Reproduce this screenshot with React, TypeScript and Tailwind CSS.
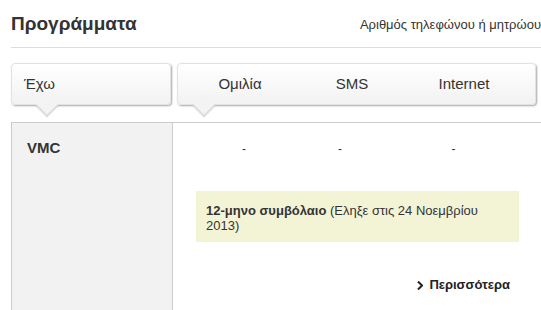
import React from "react";

function Tab({ children, className, arrowLeft }: { children: React.ReactNode; className: string; arrowLeft: string }) {
  return (
    <div className={`relative h-[42px] rounded-[4px] border border-[#e2e2e2] bg-gradient-to-b from-white to-[#f2f2f2] shadow-[1px_1px_2px_rgba(0,0,0,0.35)] ${className}`}>
      {children}
      <div className={`absolute top-[33px] ${arrowLeft} h-[16px] w-[16px] rotate-45 border-b border-r border-[#d6d6d6] bg-[#f3f3f3] shadow-[1px_1px_1px_rgba(0,0,0,0.12)]`} />
    </div>
  );
}

export default function App() {
  return (
    <div className="w-[541px] h-[310px] overflow-hidden bg-white text-[#333] font-['Liberation_Sans',Arial,sans-serif]">
      <div className="pl-[11px]">
        <div className="flex h-[48px] items-end justify-between border-b border-[#dddddd] pb-[12px]">
          <div className="text-[19px] font-bold leading-[22px] text-[#333]">Προγράμματα</div>
          <div className="text-[13px] leading-[16px] pb-[2px] text-[#333] whitespace-nowrap">Αριθμός τηλεφώνου ή μητρώου</div>
        </div>

        <div className="mt-[15px] flex">
          <Tab className="w-[160px]" arrowLeft="left-[27px]">
            <div className="pl-[12px] pt-[10px] text-[15px] leading-[20px]">Έχω</div>
          </Tab>
          <Tab className="ml-[6px] w-[359px]" arrowLeft="left-[18px]">
            <div className="flex pl-[6px] pt-[10px] text-[15px] leading-[20px]">
              <div className="w-[112px] text-center">Ομιλία</div>
              <div className="w-[112px] text-center">SMS</div>
              <div className="w-[112px] text-center">Internet</div>
            </div>
          </Tab>
        </div>

        <div className="mt-[17px] flex border-t border-[#cccccc] h-[200px]">
          <div className="w-[162px] shrink-0 border-l border-r border-[#cccccc] bg-[#f2f2f2] pl-[15px] pt-[16px] text-[15px] font-bold leading-[18px]">
            VMC
          </div>
          <div className="flex-1 pl-[23px]">
            <div className="flex w-[323px] pt-[18px] text-[12px] leading-[16px]">
              <div className="w-[96px] text-center">-</div>
              <div className="w-[96px] text-center">-</div>
              <div className="w-[131px] text-center">-</div>
            </div>
            <div className="mt-[34px] h-[51px] w-[323px] bg-[#f3f3d6] px-[10px] pt-[12px] text-[13px] leading-[15px]">
              <b>12-μηνο συμβόλαιο</b> (Εληξε στις 24 Νοεμβρίου 2013)
            </div>
            <div className="mt-[35px] flex w-[314px] items-center justify-end gap-[6px] text-[13px] font-bold leading-[16px] text-[#222]">
              <svg width="6" height="9" viewBox="0 0 6 9"><path d="M1 0.5 L5 4.5 L1 8.5" stroke="#222" strokeWidth="2" fill="none" /></svg>
              <span>Περισσότερα</span>
            </div>
          </div>
        </div>
      </div>
    </div>
  );
}
